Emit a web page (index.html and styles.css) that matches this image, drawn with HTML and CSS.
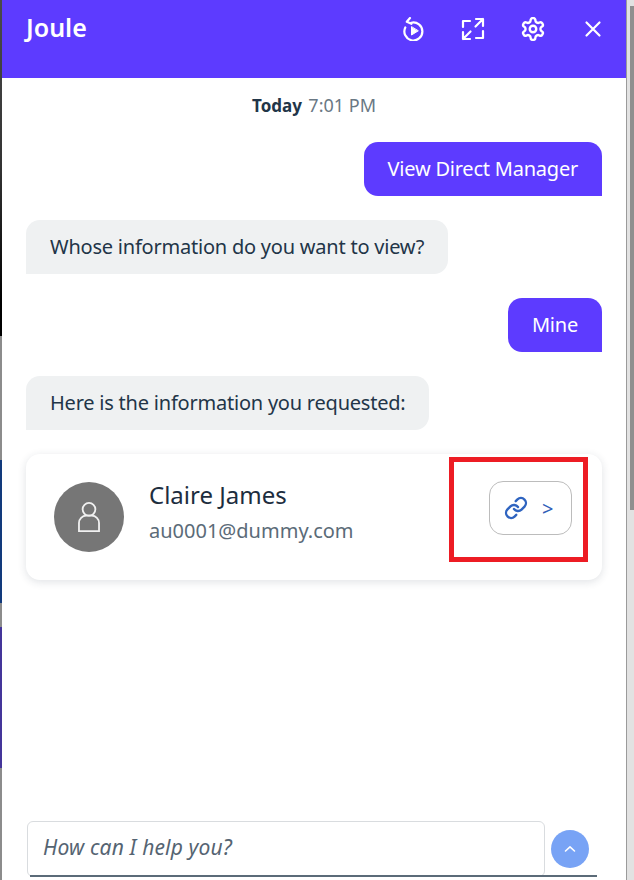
FILE: index.html
```html
<!DOCTYPE html>
<html lang="en">
<head>
    <meta charset="UTF-8">
    <meta name="viewport" content="width=device-width, initial-scale=1.0">
    <title>Joule</title>
    <link rel="stylesheet" href="styles.css">
</head>
<body>

<div class="page">
    <div class="backdrop">
        <div class="backdrop-dark"></div>
        <div class="backdrop-grey"></div>
        <div class="backdrop-navy"></div>
        <div class="backdrop-grey short"></div>
        <div class="backdrop-purple"></div>
        <div class="backdrop-grey fill"></div>
    </div>

    <div class="panel">
        <header class="panel-header">
            <h1 class="panel-title">Joule</h1>
            <div class="panel-actions">
                <svg class="icon" viewBox="0 0 24 24">
                    <path d="M4.3 10.5a9 9 0 1 0 6-4.8"/>
                    <path d="M9 1 5.8 4.8l4.6 2"/>
                    <path class="solid" d="M10.5 10v8l6.5-4z"/>
                </svg>
                <svg class="icon" viewBox="0 0 24 24">
                    <path d="M2 10V4h7"/>
                    <path d="M15 2h7v7M22 2l-7.500 7.500"/>
                    <path d="M2 15v7h7M2 22l7.500-7.500"/>
                    <path d="M22 14v7h-7"/>
                </svg>
                <svg class="icon" viewBox="1 1 22 22">
                    <path d="M12.22 2h-.44a2 2 0 0 0-2 2v.18a2 2 0 0 1-1 1.73l-.43.25a2 2 0 0 1-2 0l-.15-.08a2 2 0 0 0-2.73.73l-.22.38a2 2 0 0 0 .73 2.73l.15.1a2 2 0 0 1 1 1.72v.51a2 2 0 0 1-1 1.74l-.15.09a2 2 0 0 0-.73 2.73l.22.38a2 2 0 0 0 2.73.73l.15-.08a2 2 0 0 1 2 0l.43.25a2 2 0 0 1 1 1.73V20a2 2 0 0 0 2 2h.44a2 2 0 0 0 2-2v-.18a2 2 0 0 1 1-1.73l.43-.25a2 2 0 0 1 2 0l.15.08a2 2 0 0 0 2.73-.73l.22-.39a2 2 0 0 0-.73-2.73l-.15-.08a2 2 0 0 1-1-1.74v-.5a2 2 0 0 1 1-1.74l.15-.09a2 2 0 0 0 .73-2.73l-.22-.38a2 2 0 0 0-2.73-.73l-.15.08a2 2 0 0 1-2 0l-.43-.25a2 2 0 0 1-1-1.73V4a2 2 0 0 0-2-2z"/>
                    <circle cx="12" cy="12" r="3"/>
                </svg>
                <svg class="icon" viewBox="0 0 24 24">
                    <path d="M5.500 5.500l13 13M18.500 5.500l-13 13"/>
                </svg>
            </div>
        </header>

        <div class="chat">
            <p class="timestamp"><strong>Today</strong> <span>7:01 PM</span></p>

            <div class="bubble bubble-user">View Direct Manager</div>
            <div class="bubble bubble-bot">Whose information do you want to view?</div>
            <div class="bubble bubble-user">Mine</div>
            <div class="bubble bubble-bot">Here is the information you requested:</div>

            <div class="contact-card">
                <div class="avatar">
                    <svg class="avatar-icon" viewBox="0 0 26 34">
                        <circle cx="13" cy="8" r="7"/>
                        <path d="M2 32V23a8 8 0 0 1 8-8h6a8 8 0 0 1 8 8v9z"/>
                    </svg>
                </div>
                <div class="contact-info">
                    <div class="contact-name">Claire James</div>
                    <div class="contact-email">au0001@dummy.com</div>
                </div>
                <button class="link-button" type="button">
                    <svg class="link-icon" viewBox="0 0 24 24">
                        <path d="M10 13a5 5 0 0 0 7.54.54l3-3a5 5 0 0 0-7.07-7.07l-1.72 1.71"/>
                        <path d="M14 11a5 5 0 0 0-7.54-.54l-3 3a5 5 0 0 0 7.07 7.07l1.71-1.71"/>
                    </svg>
                    <span>&gt;</span>
                </button>
                <div class="highlight"></div>
            </div>
        </div>

        <div class="composer">
            <div class="composer-input">How can I help you?</div>
            <button class="send-button" type="button">
                <svg viewBox="0 0 12 8"><path d="M1.500 6 6 1.800 10.500 6"/></svg>
            </button>
        </div>
    </div>

    <div class="scroll-track">
        <div class="scroll-thumb"></div>
    </div>
</div>

</body>
</html>
```

FILE: styles.css
```css
html, body {
    margin: 0;
    padding: 0;
}
body {
    font-family: "Noto Sans", Arial, sans-serif;
    color: #223548;
    background-color: #e2e2e2;
}
.page {
    display: flex;
    height: 880px;
    overflow: hidden;
}
.backdrop {
    width: 2px;
    display: flex;
    flex-direction: column;
    flex-shrink: 0;
}
.backdrop-dark {
    height: 336px;
    background: linear-gradient(#4a4a4a, #333 50%, #000 90%);
}
.backdrop-grey {
    height: 124px;
    background-color: #8c8c8c;
}
.backdrop-grey.short {
    height: 24px;
}
.backdrop-grey.fill {
    flex: 1;
}
.backdrop-navy {
    height: 143px;
    background-color: #123a7c;
}
.backdrop-purple {
    height: 141px;
    background-color: #44359a;
}
.panel {
    width: 624px;
    flex-shrink: 0;
    display: flex;
    flex-direction: column;
    background-color: white;
    border-right: 1px solid #9b9b9b;
}
.panel-header {
    height: 78px;
    flex-shrink: 0;
    background-color: #5d3bff;
    color: white;
    display: flex;
    align-items: flex-start;
    justify-content: space-between;
    padding: 0 21px 0 24px;
    box-sizing: border-box;
}
.panel-title {
    margin: 10px 0 0;
    font-size: 25px;
    line-height: 34px;
    font-weight: 600;
}
.panel-actions {
    display: flex;
    gap: 36px;
    margin-top: 17px;
}
.icon {
    width: 24px;
    height: 24px;
    fill: none;
    stroke: white;
    stroke-width: 2.2;
    stroke-linecap: round;
    stroke-linejoin: round;
}
.icon .solid {
    fill: white;
    stroke-width: 1;
}
.chat {
    flex: 1;
    display: flex;
    flex-direction: column;
    align-items: flex-start;
    gap: 24px;
    padding: 0 24px;
}
.timestamp {
    align-self: center;
    margin: 15px 0 0;
    height: 25px;
    line-height: 25px;
    font-size: 17px;
}
.timestamp strong {
    font-weight: 700;
    color: #223548;
}
.timestamp span {
    color: #6a7884;
    font-size: 18px;
    margin-left: 2px;
}
.bubble {
    height: 54px;
    line-height: 54px;
    padding: 0 24px;
    font-size: 20px;
    letter-spacing: -0.22px;
    box-sizing: border-box;
    white-space: nowrap;
}
.bubble-user {
    align-self: flex-end;
    background-color: #5d3bff;
    color: white;
    border-radius: 14px 14px 0 14px;
}
.bubble-bot {
    background-color: #eff1f2;
    color: #223548;
    border-radius: 14px 14px 14px 0;
}
.contact-card {
    position: relative;
    align-self: stretch;
    height: 126px;
    display: flex;
    align-items: center;
    background-color: white;
    border-radius: 14px;
    box-shadow: 0 2px 8px rgba(34, 53, 72, 0.14);
    padding: 0 30px 0 28px;
    box-sizing: border-box;
}
.avatar {
    width: 70px;
    height: 70px;
    border-radius: 50%;
    background-color: #767676;
    display: flex;
    align-items: center;
    justify-content: center;
    flex-shrink: 0;
}
.avatar-icon {
    width: 24px;
    height: 31px;
    fill: none;
    stroke: #f0f0f0;
    stroke-width: 2;
}
.contact-info {
    flex: 1;
    margin: 0 0 10px 25px;
}
.contact-name {
    font-size: 24px;
    line-height: 30px;
    color: #1d2d3e;
}
.contact-email {
    font-size: 20px;
    line-height: 28px;
    margin-top: 7px;
    color: #5b6b78;
}
.link-button {
    width: 83px;
    height: 54px;
    margin-bottom: 18px;
    border: 1px solid #bcbcbc;
    border-radius: 14px;
    background-color: white;
    display: flex;
    align-items: center;
    gap: 14px;
    padding: 0 0 0 14px;
    box-sizing: border-box;
    color: #2f5fb8;
    font-family: inherit;
    font-size: 20px;
}
.link-icon {
    width: 24px;
    height: 24px;
    fill: none;
    stroke: #2f64c0;
    stroke-width: 2.4;
    stroke-linecap: round;
    stroke-linejoin: round;
}
.highlight {
    position: absolute;
    left: 423px;
    top: 3px;
    width: 139px;
    height: 105px;
    box-sizing: border-box;
    border: 5px solid #ed1c24;
}
.composer {
    position: relative;
    flex-shrink: 0;
    display: flex;
    align-items: center;
    gap: 6px;
    margin: 0 0 3px 25px;
}
.composer::after {
    content: "";
    position: absolute;
    left: 3px;
    bottom: 0;
    width: 567px;
    height: 2px;
    background-color: #5b6b78;
}
.composer-input {
    width: 518px;
    height: 56px;
    line-height: 50px;
    padding-left: 15px;
    box-sizing: border-box;
    border: 1px solid #d9dcdf;
    border-radius: 6px;
    font-size: 21px;
    letter-spacing: 0.15px;
    font-style: italic;
    color: #556472;
}
.send-button {
    width: 38px;
    height: 38px;
    border: none;
    border-radius: 50%;
    background-color: #78a3f5;
    padding: 0;
    display: flex;
    align-items: center;
    justify-content: center;
}
.send-button svg {
    width: 12px;
    height: 8px;
    fill: none;
    stroke: white;
    stroke-width: 1.600;
    stroke-linecap: round;
    stroke-linejoin: round;
}
.scroll-track {
    flex: 1;
    display: flex;
    justify-content: flex-end;
    align-items: flex-start;
}
.scroll-thumb {
    width: 4px;
    height: 504px;
    margin-top: 6px;
    background-color: #8f8f8f;
}
```
